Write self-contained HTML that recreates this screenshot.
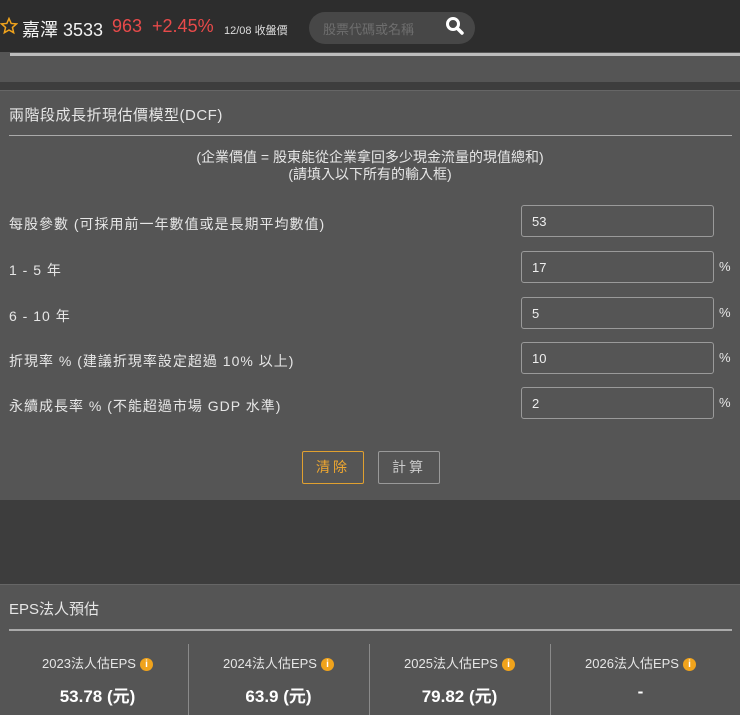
<!DOCTYPE html>
<html><head><meta charset="utf-8"><style>
*{margin:0;padding:0;box-sizing:border-box}
body{width:740px;height:715px;overflow:hidden;background:#3d3d3d;font-family:"Liberation Sans","Noto Sans CJK TC",sans-serif;color:#e6e6e6;position:relative}
.a{position:absolute;white-space:nowrap}
.hdr{position:absolute;left:0;top:0;width:740px;height:52px;background:#2d2d2d}
.inp{position:absolute;left:521px;width:193px;height:32px;border:1px solid #9a9a9a;border-radius:3px;font-size:13px;padding:8px 0 0 10px;color:#eee}
.lbl{font-size:14px;letter-spacing:1px;left:9px}
.pct{left:719px;font-size:13px}
.col{position:absolute;top:644px;height:71px;border-left:1px solid #8a8a8a}
.ct{position:absolute;width:185px;text-align:center;font-size:13px}
.cv{position:absolute;width:185px;text-align:center;font-size:17px;font-weight:bold;color:#fff}
.i{display:inline-block;width:13px;height:13px;border-radius:50%;background:#f0a31c;color:#fff;font-size:10px;line-height:13px;text-align:center;vertical-align:1px;margin-left:4px;font-weight:bold}
</style></head><body>
<div class="hdr"></div>
<svg class="a" style="left:0;top:17px" width="18" height="18" viewBox="0 0 24 24"><path d="M12 2l2.9 6.6 7.1.6-5.4 4.7 1.6 7L12 17.3 5.8 20.9l1.6-7L2 9.2l7.1-.6z" fill="none" stroke="#f0a31c" stroke-width="2"/></svg>
<div class="a" style="left:22px;top:16px;font-size:18px;color:#f2f2f2">嘉澤 3533</div>
<div class="a" style="left:112px;top:16px;font-size:18px;color:#e84a4a">963&nbsp; +2.45%</div>
<div class="a" style="left:224px;top:22px;font-size:11px;color:#ddd">12/08 收盤價</div>
<div class="a" style="left:309px;top:12px;width:166px;height:32px;border-radius:16px;background:#474747"></div>
<div class="a" style="left:323px;top:19px;font-size:13px;color:#6e6e6e">股票代碼或名稱</div>
<svg class="a" style="left:445px;top:16px" width="20" height="20" viewBox="0 0 20 20"><circle cx="8" cy="8" r="5.5" fill="none" stroke="#fff" stroke-width="3"/><path d="M12 12l5 5" stroke="#fff" stroke-width="3.5" stroke-linecap="round"/></svg>
<div class="a" style="left:0;top:52px;width:740px;height:30px;background:#555"></div>
<div class="a" style="left:10px;top:53px;width:730px;height:3px;background:#bdbdbd"></div>
<div class="a" style="left:0;top:90px;width:740px;height:410px;background:#555;border-top:1px solid #666"></div>
<div class="a" style="left:9px;top:104px;font-size:15px;letter-spacing:.5px">兩階段成長折現估價模型(DCF)</div>
<div class="a" style="left:9px;top:135px;width:723px;height:1px;background:#aaa"></div>
<div class="a" style="left:0;top:147px;width:740px;text-align:center;font-size:14px">(企業價值 = 股東能從企業拿回多少現金流量的現值總和)</div>
<div class="a" style="left:0;top:164px;width:740px;text-align:center;font-size:14px">(請填入以下所有的輸入框)</div>
<div class="a lbl" style="top:214px">每股參數 (可採用前一年數值或是長期平均數值)</div>
<div class="a lbl" style="top:260px">1 - 5 年</div>
<div class="a lbl" style="top:306px">6 - 10 年</div>
<div class="a lbl" style="top:351px">折現率 % (建議折現率設定超過 10% 以上)</div>
<div class="a lbl" style="top:396px">永續成長率 % (不能超過市場 GDP 水準)</div>
<div class="inp" style="top:205px">53</div>
<div class="inp" style="top:251px">17</div><div class="a pct" style="top:259px">%</div>
<div class="inp" style="top:297px">5</div><div class="a pct" style="top:305px">%</div>
<div class="inp" style="top:342px">10</div><div class="a pct" style="top:350px">%</div>
<div class="inp" style="top:387px">2</div><div class="a pct" style="top:395px">%</div>
<div class="a" style="left:302px;top:451px;width:62px;height:33px;border:1px solid #e0a030;border-radius:2px;color:#f0a830;font-size:14px;letter-spacing:3px;text-align:center;line-height:31px">清除</div>
<div class="a" style="left:378px;top:451px;width:62px;height:33px;border:1px solid #999;border-radius:2px;color:#ccc;font-size:14px;letter-spacing:3px;text-align:center;line-height:31px">計算</div>
<div class="a" style="left:0;top:584px;width:740px;height:131px;background:#555;border-top:1px solid #666"></div>
<div class="a" style="left:9px;top:598px;font-size:15px">EPS法人預估</div>
<div class="a" style="left:9px;top:629px;width:723px;height:2px;background:#aaa"></div>
<div class="col" style="left:188px"></div><div class="col" style="left:369px"></div><div class="col" style="left:550px"></div>
<div class="ct" style="left:5px;top:653px">2023法人估EPS<span class="i">i</span></div>
<div class="ct" style="left:186px;top:653px">2024法人估EPS<span class="i">i</span></div>
<div class="ct" style="left:367px;top:653px">2025法人估EPS<span class="i">i</span></div>
<div class="ct" style="left:548px;top:653px">2026法人估EPS<span class="i">i</span></div>
<div class="cv" style="left:5px;top:682px">53.78 (元)</div>
<div class="cv" style="left:186px;top:682px">63.9 (元)</div>
<div class="cv" style="left:367px;top:682px">79.82 (元)</div>
<div class="cv" style="left:548px;top:682px">-</div>
</body></html>
